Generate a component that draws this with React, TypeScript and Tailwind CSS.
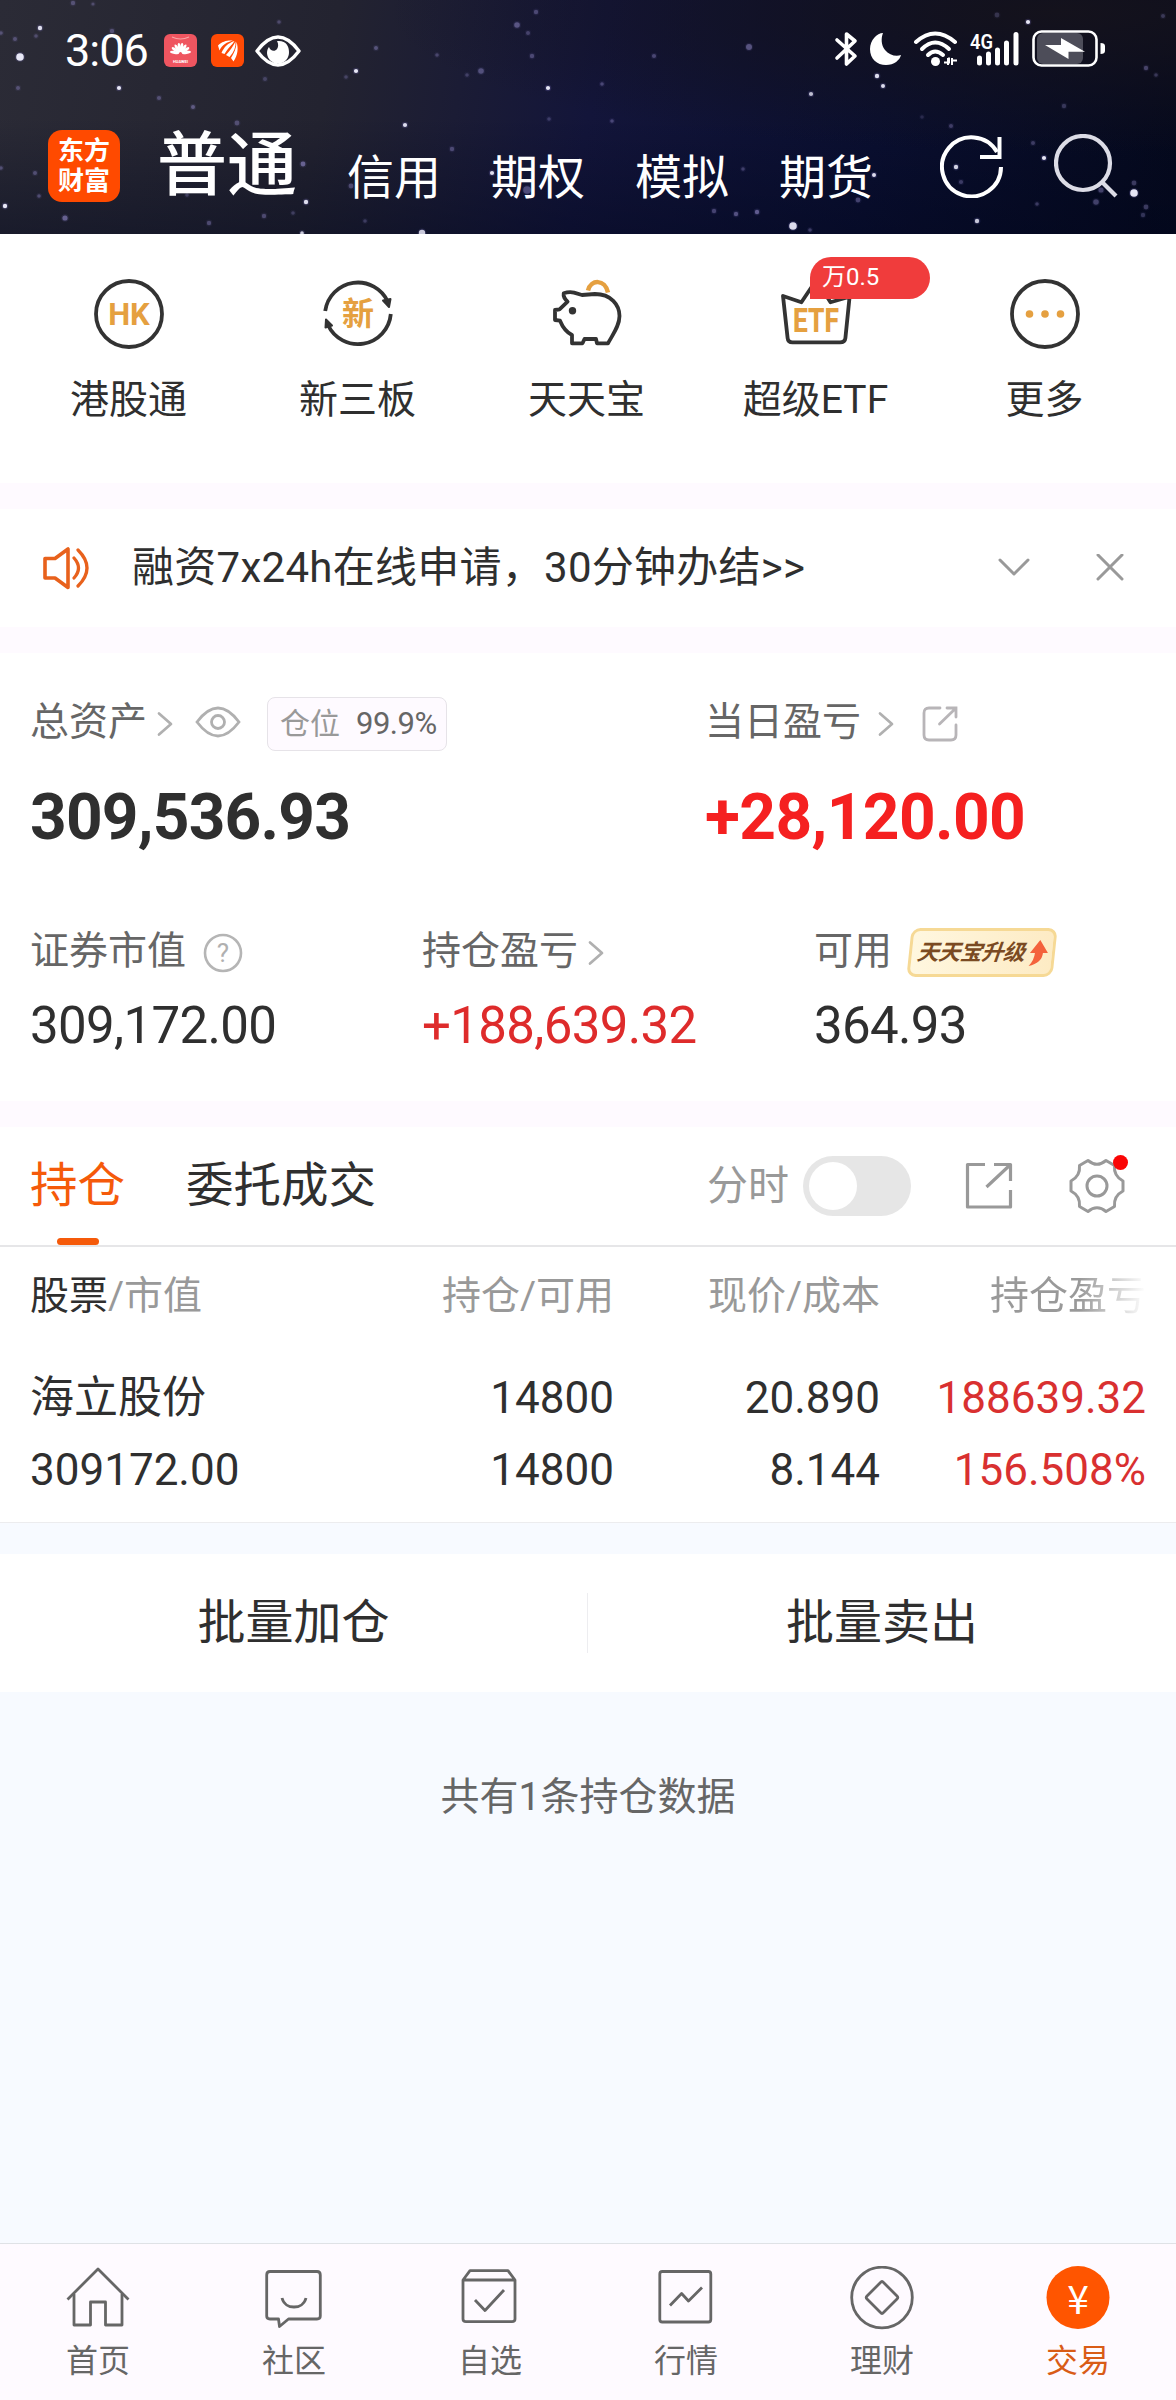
import type { ReactNode } from "react";
import clsx from "clsx";

// x, y, radius, opacity
const stars = [
  [20, 57, 4, 0.95], [40, 28, 2.4, 0.9], [15, 39, 2.2, 0.4], [36, 36, 2, 0.35], [1, 33, 2, 0.4], [73, 3, 2.4, 0.4],
  [93, 4, 1.8, 0.35], [112, 31, 2.4, 0.4], [18, 88, 2.2, 0.4], [119, 88, 2.3, 0.95], [159, 98, 2.3, 0.4],
  [193, 107, 2.2, 0.5], [237, 123, 2.6, 0.4], [265, 79, 2.2, 0.3], [279, 22, 2, 0.35], [346, 77, 2, 0.3],
  [356, 71, 2.3, 0.95], [376, 48, 2.2, 0.45], [437, 55, 2, 0.35], [481, 71, 3, 0.45], [467, 75, 2, 0.3],
  [517, 25, 3, 0.5], [536, 12, 2.4, 0.4], [528, 33, 2.2, 0.35], [532, 56, 2.4, 0.4], [548, 88, 2.3, 0.95],
  [549, 119, 2, 0.3], [405, 125, 2.3, 0.9], [303, 164, 2.6, 0.6], [306, 202, 2.4, 0.9], [452, 149, 2.4, 0.4],
  [492, 173, 2.3, 0.9], [527, 190, 4, 0.45], [351, 186, 2.6, 0.4], [65, 218, 2.8, 0.6], [5, 206, 2.4, 0.95],
  [35, 173, 2.2, 0.4], [39, 196, 2, 0.4], [1, 168, 2, 0.4], [209, 223, 2.4, 0.4], [264, 216, 2.4, 0.4],
  [302, 233, 2, 0.8], [422, 233, 3.4, 0.8], [365, 221, 2, 0.3], [293, 213, 2, 0.3], [187, 195, 2, 0.3],
  [749, 47, 3.2, 0.5], [654, 56, 2.3, 0.4], [602, 84, 2, 0.4], [612, 121, 2, 0.4], [811, 94, 2.3, 0.75],
  [877, 76, 2.4, 0.9], [883, 86, 2.2, 0.9], [1028, 22, 2.3, 0.95], [997, 15, 2.6, 0.25], [1163, 16, 2.2, 0.3],
  [1146, 68, 2.4, 0.4], [1156, 75, 2, 0.3], [1064, 106, 2.4, 0.3], [951, 126, 2.2, 0.35], [1033, 143, 2.2, 0.35],
  [1044, 158, 2.3, 0.95], [956, 167, 2.4, 0.85], [961, 182, 2.3, 0.35], [1134, 193, 4, 0.95], [1134, 183, 2.6, 0.35],
  [1096, 202, 3, 0.4], [1101, 190, 2.8, 0.4], [1146, 207, 2.6, 0.35], [1037, 204, 2, 0.35], [977, 221, 2.4, 0.8],
  [793, 226, 4, 0.9], [757, 212, 2.4, 0.6], [736, 214, 2.4, 0.5], [714, 211, 2.4, 0.4], [858, 200, 2.6, 0.4],
  [874, 175, 2.2, 0.9], [743, 169, 2, 0.35], [810, 230, 2, 0.35], [1143, 215, 2.4, 0.3], [922, 117, 2, 0.2],
];

const accounts = ["信用", "期权", "模拟", "期货"];

const positions = [
  { name: "海立股份", amount: "14800", price: "20.890", profit: "188639.32" },
  { name: "309172.00", amount: "14800", price: "8.144", profit: "156.508%" },
];

const Chevron = ({ className }: { className?: string }) => (
  <svg viewBox="0 0 16 26" className={clsx("h-[26px] w-4 shrink-0", className)} fill="none" stroke="#b0b0b0" strokeWidth="2.700" strokeLinecap="round" strokeLinejoin="round">
    <path d="M2 2.500 14 13 2 23.500" />
  </svg>
);

function StatusBar() {
  return (
    <div className="flex h-[67px] items-end pl-[65px] pr-[70px]">
      <span className="w-[99px] text-[45px] leading-[33px] tracking-[-1px] text-white">3:06</span>
      <svg viewBox="0 0 33 33" className="size-[33px]">
        <rect width="33" height="33" rx="6" fill="#ef5560" />
        <path d="M8 3q8.500 4 17 0" fill="none" stroke="#f9a6a6" strokeWidth="1.200" />
        <g fill="#fff">
          {[-80, -55, -32, -10, 10, 32, 55, 80].map((a) => (
            <ellipse key={a} cx="16.500" cy="13.500" rx="1.500" ry="4.600" transform={`rotate(${a} 16.500 19.500)`} />
          ))}
        </g>
        <text x="16.500" y="28.500" fontSize="4" fontWeight="700" fill="#fff" textAnchor="middle">HUAWEI</text>
      </svg>
      <svg viewBox="0 0 33 33" className="ml-3.5 size-[33px]">
        <rect width="33" height="33" rx="6" fill="#ff4a05" />
        <g fill="#fff">
          <path d="M7 11.500C11 7 17 6 22 6.500 16 8 11 11 8.500 16.500Z" />
          <path d="M10.500 19C13 13 17 9 23.500 7 21 11 17 14 13.500 20Z" />
          <path d="M15 21C19 17 22 12 24.500 7.500 25 13 23 18 18.500 23Z" />
          <path d="M20 24C23 19 25.500 14 25.500 8 27.500 14 27 21 22.500 27.500Z" />
        </g>
      </svg>
      <svg viewBox="0 0 46 32" className="ml-[11px] h-8 w-[46px]">
        <path d="M2 16Q23-12 44 16 23 44 2 16Z" fill="none" stroke="#fff" strokeWidth="3.400" strokeLinejoin="round" />
        <path d="M22 6C31 5 34 11 34 17A11 11 0 0 1 12 18C12 15 13 13 14 12 15 16 20 17 22 14 24 11 23 8 22 6Z" fill="#fff" />
      </svg>

      <div className="ml-auto flex h-[37px] items-center">
        <svg viewBox="0 0 24 36" className="h-9 w-6" fill="none" stroke="#fff" strokeWidth="3.600" strokeLinecap="round" strokeLinejoin="round">
          <path d="M3 9 21 25 12.500 33V3L21 10 3 27" />
        </svg>
        <svg viewBox="0 0 33 34" className="ml-[11px] h-[34px] w-[33px]">
          <path d="M14 1C8 1 1 8 1 17 1 27 8 33 17 33 25 33 31 28 32 23 27 25 20 23 16 18 12 13 12 6 14 1Z" fill="#fff" />
        </svg>
        <svg viewBox="0 0 46 36" className="ml-[11px] h-9 w-[46px]">
          <g fill="none" stroke="#fff" strokeWidth="4" strokeLinecap="round">
            <path d="M3 11Q22-6 42 11" />
            <path d="M9 18Q22 5 36 18" />
            <path d="M15 24Q22 17 30 24" />
          </g>
          <circle cx="22.500" cy="30.500" r="4.500" fill="#fff" />
          <path d="M31 31.500h5v-5M35 27v7M39 34v-7M39 29.500h5" fill="none" stroke="#fff" strokeWidth="2" />
        </svg>
        <svg viewBox="0 0 52 36" className="ml-2.5 h-9 w-[52px] overflow-visible">
          <text x="1" y="18" fontSize="21" fontWeight="600" fill="#fff" textLength="23" lengthAdjust="spacingAndGlyphs">4G</text>
          <g stroke="#fff" strokeWidth="5" strokeLinecap="round">
            <path d="M10.500 27v5M19.500 23v9M28.500 19v13M37.500 12v20M47 3.500V32" />
          </g>
        </svg>
        <svg viewBox="0 0 74 37" className="ml-[11px] h-[37px] w-[74px]">
          <rect x="5" y="3" width="46" height="31" rx="6" fill="#4d4d59" />
          <rect x="1.500" y="1.500" width="63" height="34" rx="8" fill="none" stroke="#fff" strokeWidth="2.600" />
          <path d="M68.500 13v11q4.500 0 4.500-3v-5q0-3-4.500-3Z" fill="#fff" />
          <path d="M29 8 53 21.700H36.500V29L13 15H29Z" fill="#fff" />
        </svg>
      </div>
    </div>
  );
}

function Header() {
  return (
    <header className="relative h-[234px] overflow-hidden bg-[linear-gradient(100deg,#2b2b36_0%,#232330_28%,#13153a_50%,#0a0f30_74%,#05091c_100%)]">
      <div className="absolute inset-0 bg-[radial-gradient(ellipse_at_90%_5%,#14121c_0%,#14121c00_45%),linear-gradient(to_bottom,#00051c00_50%,#00051c66_100%)]" />
      <svg viewBox="0 0 1176 234" className="absolute inset-0 h-[234px] w-full">
        {stars.map(([x, y, r, o]) => (
          <g key={`${x}-${y}`}>
            <circle cx={x} cy={y} r={r + 1} fill="#8a82d8" opacity={o * 0.2} />
            <circle cx={x} cy={y} r={r - 0.2} fill={o > 0.7 ? "#f1f1ff" : "#8f87c4"} opacity={o} />
          </g>
        ))}
      </svg>
      <div className="relative">
        <StatusBar />
        <div className="mt-[63px] flex h-[72px] items-center pl-12">
          <div className="flex size-[72px] flex-col items-center justify-center rounded-[14px] bg-[#ff4a00] text-[26px] font-bold leading-[30px] text-white">
            <span>东方</span>
            <span>财富</span>
          </div>
          <h1 className="ml-[37px] text-[70px] font-medium leading-[72px] text-white">普通</h1>
          <nav className="ml-[50px] flex gap-[50px] pt-[23px]">
            {accounts.map((a) => (
              <span key={a} className="text-[47px] leading-[48px] text-white">{a}</span>
            ))}
          </nav>
          <svg viewBox="0 0 64 64" className="ml-[67px] size-16 shrink-0" fill="none" stroke="#fff" strokeWidth="4">
            <path d="M61 33A29.500 29.500 0 1 1 57 18" />
            <path d="M59.500 3v20H40" />
          </svg>
          <svg viewBox="0 0 64 64" className="ml-[50px] size-16 shrink-0" fill="none" stroke="#dcdce6" strokeWidth="4.200">
            <circle cx="29" cy="29" r="27" />
            <path d="m48 48 14 14" />
          </svg>
        </div>
      </div>
    </header>
  );
}

function QuickLink({ label, children }: { label: string; children: ReactNode }) {
  return (
    <div className="relative flex flex-col items-center">
      <svg viewBox="0 0 72 72" className="size-[72px]" fill="none" stroke="#333" strokeWidth="3.800" strokeLinejoin="round">
        {children}
      </svg>
      <span className="mt-[30px] text-[39px] leading-10 text-[#2f2f2f]">{label}</span>
      {label === "超级ETF" && (
        <span className="absolute left-[109px] top-[-21px] h-[42px] w-[120px] rounded-[21px] rounded-bl-none bg-[#f03c3c] pl-3 text-[24px] leading-[41px] text-white">万0.5</span>
      )}
    </div>
  );
}

function QuickLinks() {
  return (
    <section className="grid h-[249px] grid-cols-5 bg-white pl-3.5 pr-[17px] pt-11">
      <QuickLink label="港股通">
        <circle cx="36" cy="36" r="33" />
        <text x="36" y="47" fontSize="31" fontWeight="700" fill="#e5a040" stroke="none" textAnchor="middle">HK</text>
      </QuickLink>
      <QuickLink label="新三板">
        <path d="M3.200 33A33 33 0 0 1 66 24" />
        <path d="M68.800 36A33 33 0 0 1 6 47" />
        <path d="m61 22.500 6 6.500 1.500-8ZM3.500 49.500l.500-8 6 6Z" fill="#333" strokeWidth="2" />
        <text x="36" y="47" fontSize="32" fontWeight="700" fill="#e5a040" stroke="none" textAnchor="middle">新</text>
      </QuickLink>
      <QuickLink label="天天宝">
        <path d="M12.700 15.300Q18 13.500 23 14.600L31 17 44 16C60 16 68.500 27 68.500 38 68.500 48 62 56 57 65.300H46L45 61H33.500L31.500 65.300H21V57C15 54 12 50 9 42.700L4 42V32L8.500 31.300 16.600 23.700C14 21 12 19 12.700 15.300Z" />
        <circle cx="21.500" cy="32.700" r="3.700" fill="#333" stroke="none" />
        <path d="M37 12.500C40 1 54 1 57 14.500" stroke="#e5a040" strokeWidth="4.500" />
      </QuickLink>
      <QuickLink label="超级ETF">
        <path d="M3 18 21.400 24.300 36.300 2 50.500 24.300 69.600 18.700 65.400 60Q65 64.300 60 64.300H12.500Q8 64.300 7.600 60Z" />
        <text x="36" y="54" fontSize="33" fontWeight="800" fill="#e5a040" stroke="none" textAnchor="middle" textLength="46" lengthAdjust="spacingAndGlyphs">ETF</text>
      </QuickLink>
      <QuickLink label="更多">
        <circle cx="36" cy="36" r="33" />
        <g fill="#e5a040" stroke="none">
          <circle cx="20.500" cy="36" r="3.800" />
          <circle cx="36" cy="36" r="3.800" />
          <circle cx="51.500" cy="36" r="3.800" />
        </g>
      </QuickLink>
    </section>
  );
}

function Notice() {
  return (
    <section className="flex h-[118px] items-center bg-white pl-[41px]">
      <svg viewBox="0 0 50 44" className="h-11 w-[50px]" fill="none" stroke="#e8611c" strokeWidth="3.600" strokeLinecap="round" strokeLinejoin="round">
        <path d="M4 12.500H14L27 3V41.500L14 32H4Z" />
        <path d="M33 12Q42 22 33 32M37 4Q55 22 37 40" strokeWidth="3.200" />
      </svg>
      <p className="ml-[41px] text-[42px] leading-[42px] tracking-[0.27px] text-[#2f2f2f]">融资7x24h在线申请，30分钟办结&gt;&gt;</p>
      <svg viewBox="0 0 32 20" className="ml-auto h-5 w-8" fill="none" stroke="#999" strokeWidth="3" strokeLinecap="round" strokeLinejoin="round">
        <path d="m2 2 14 14L30 2" />
      </svg>
      <svg viewBox="0 0 28 28" className="ml-[66px] mr-[52px] size-7" fill="none" stroke="#999" strokeWidth="3" strokeLinecap="round">
        <path d="m2 1 24 24M26 1 2 25" />
      </svg>
    </section>
  );
}

function Assets() {
  return (
    <section className="h-[448px] bg-white pt-[42px]">
      <div className="flex">
        <div className="w-[675px] pl-[30px]">
          <div className="flex h-[54px] items-center text-[39px] leading-[54px] text-[#666]">
            总资产
            <Chevron className="ml-2.5 mt-1" />
            <svg viewBox="0 0 46 32" className="ml-[22px] h-8 w-[46px]" fill="none" stroke="#b0b0b0" strokeWidth="2.800">
              <path d="M2 16Q23-12 44 16 23 44 2 16Z" />
              <circle cx="23" cy="16" r="6.500" />
            </svg>
            <span className="ml-[26px] mt-[3px] flex h-[54px] w-[180px] items-center rounded-lg border border-[#e6e3e8] bg-[#fefaff] pl-3 text-[30px] leading-[50px] text-[#999]">
              仓位
              <span className="ml-4 text-[31px] tracking-[-0.5px] text-[#666]">99.9%</span>
            </span>
          </div>
          <div className="mt-[37px] h-16 text-[64px] font-bold leading-[64px] tracking-[-0.8px] text-[#2f2f2f]">309,536.93</div>
        </div>
        <div className="pl-[30px]">
          <div className="flex h-[54px] items-center text-[39px] leading-[54px] text-[#666]">
            当日盈亏
            <Chevron className="ml-[17px] mt-1" />
            <svg viewBox="0 0 36 36" className="ml-7 mt-[3px] size-9" fill="none" stroke="#b8b5b8" strokeWidth="2.800" strokeLinecap="round">
              <path d="M18 2H7Q2 2 2 7V29Q2 34 7 34H29Q34 34 34 29V19M25 2H34V11M34 2 17.500 18" />
            </svg>
          </div>
          <div className="mt-[37px] h-16 text-[64px] font-bold leading-[64px] tracking-[-0.6px] text-[#f52020]">+28,120.00</div>
        </div>
      </div>
      <div className="mt-[75px] flex text-[51px] leading-[56px] tracking-[-0.65px] text-[#2f2f2f]">
        <div className="w-[392px] pl-[30px]">
          <div className="flex h-[52px] items-center text-[39px] leading-[52px] tracking-normal text-[#666]">
            证券市值
            <svg viewBox="0 0 40 40" className="ml-[17px] mt-1 size-10">
              <circle cx="20" cy="20" r="18" fill="none" stroke="#b5b5b5" strokeWidth="2.600" />
              <text x="20" y="29" fontSize="26" fill="#b0b0b0" textAnchor="middle">?</text>
            </svg>
          </div>
          <div className="mt-[21px]">309,172.00</div>
        </div>
        <div className="w-[392px] pl-[30px]">
          <div className="flex h-[52px] items-center text-[39px] leading-[52px] tracking-normal text-[#666]">
            持仓盈亏
            <Chevron className="ml-2.5 mt-[3px]" />
          </div>
          <div className="mt-[21px] text-[#de2b2b]">+188,639.32</div>
        </div>
        <div className="pl-[30px]">
          <div className="flex h-[52px] items-center text-[39px] leading-[52px] tracking-normal text-[#666]">
            可用
            <span className="relative ml-[17px] mt-0.5 flex h-[49px] w-[146px] -skew-x-6 items-center rounded-[9px] border-[3px] border-[#f6d995] bg-[linear-gradient(90deg,#fff7df,#fdebc4)] pl-[5px] text-[22px] font-bold italic leading-[44px] tracking-[-0.5px] text-[#7a4a22]">
              天天宝升级
              <svg viewBox="0 0 20 28" className="ml-[3px] h-7 w-5 shrink-0">
                <path d="M11 1 20 14H15Q15 24 2 27 7 21 7 14H2Z" fill="#f4623c" />
              </svg>
            </span>
          </div>
          <div className="mt-[21px]">364.93</div>
        </div>
      </div>
    </section>
  );
}

function Tabs() {
  return (
    <div className="flex h-[120px] items-center border-b-2 border-[#e6e6e8] pl-[30px] text-[47.500px] leading-[118px] text-[#2f2f2f]">
      <div className="relative text-[#f55a0a]">
        持仓
        <span className="absolute bottom-0 left-[27px] h-[7px] w-[42px] rounded-full bg-[#f55a0a]" />
      </div>
      <div className="ml-[61px]">委托成交</div>
      <span className="ml-[331px] text-[41px] text-[#999]">分时</span>
      <span className="ml-[14px] flex h-[60px] w-[108px] items-center rounded-full bg-[#e6e6e6] pl-1.5">
        <span className="size-12 rounded-full bg-white" />
      </span>
      <svg viewBox="0 0 48 48" className="ml-[54px] size-12" fill="none" stroke="#999" strokeWidth="3.200" strokeLinejoin="round">
        <path d="M20 2.500H2.500V45H45.500V28M29 2.500H45.500V19M45 3 21.500 25" />
      </svg>
      <div className="relative ml-14">
        <svg viewBox="0 0 56 56" className="size-14" fill="none" stroke="#999" strokeWidth="3" strokeLinejoin="round">
          <path d="M19 2.500Q28 10 37 2.500L45.500 7.500Q44.500 18 54 23V33Q44.500 38 45.500 48.500L37 53.500Q28 46 19 53.500L10.500 48.500Q11.500 38 2 33V23Q11.500 18 10.500 7.500Z" />
          <circle cx="28" cy="28" r="10" />
        </svg>
        <span className="absolute right-[-3px] top-[-3px] size-[15px] rounded-full bg-[#fa0505]" />
      </div>
    </div>
  );
}

function Positions() {
  return (
    <section className="bg-white">
      <Tabs />
      <div className="grid h-[276px] grid-cols-[300px_284px_266px_266px] content-start border-b border-[#ececee] pl-[30px] text-right text-[44px] leading-[72px] text-[#2f2f2f]">
        <div className="h-[115px] text-left text-[39px] leading-[98px] text-[#999]">
          <span className="text-[#2f2f2f]">股票</span>/市值
        </div>
        <div className="text-[39px] leading-[98px] text-[#999]">持仓/可用</div>
        <div className="text-[39px] leading-[98px] text-[#999]">现价/成本</div>
        <div className="bg-[linear-gradient(90deg,#999_75%,#fff_100%)] bg-clip-text text-[39px] leading-[98px] text-transparent">持仓盈亏</div>
        {positions.map((p) => (
          <div key={p.name} className="contents">
            <div className="text-left">{p.name}</div>
            <div>{p.amount}</div>
            <div>{p.price}</div>
            <div className="text-[#d93030]">{p.profit}</div>
          </div>
        ))}
      </div>
    </section>
  );
}

function BatchActions() {
  return (
    <section className="mt-[31px] flex h-[138px] items-center bg-white text-center text-[48px] leading-[60px] text-[#2f2f2f]">
      <div className="w-[587px]">批量加仓</div>
      <div className="h-[60px] w-px bg-[#ededf0]" />
      <div className="flex-1">批量卖出</div>
    </section>
  );
}

function NavItem({ label, active, children }: { label: string; active?: boolean; children: ReactNode }) {
  return (
    <div className={clsx("flex flex-1 flex-col items-center text-[32px] leading-10", active ? "text-[#d95c17]" : "text-[#666]")}>
      <svg viewBox="0 0 64 64" className="mb-[11px] size-16" fill="none" stroke="#666" strokeWidth="2.800" strokeLinejoin="round">
        {children}
      </svg>
      {label}
    </div>
  );
}

function BottomNav() {
  return (
    <nav className="flex h-[157px] border-t border-[#dfe2e6] bg-[#fefaff] pt-[22px]">
      <NavItem label="首页">
        <path d="M1.500 33.500 32 3 62.500 33.500" />
        <path d="M8 28V59H24.500V36H39.500V59H56V28" />
      </NavItem>
      <NavItem label="社区">
        <path d="M8 5.500H55Q58.300 5.500 58.300 9V50Q58.300 53 55 53H26.500L17.500 60.500 16.500 53H8Q4.700 53 4.700 50V9Q4.700 5.500 8 5.500Z" />
        <path d="M20 32C23 44 41 44 44 32" />
      </NavItem>
      <NavItem label="自选">
        <path d="M5 14 12 4.700H50L57 14V53Q57 55.700 54 55.700H8Q5 55.700 5 53ZM5 14H57" />
        <path d="m17 34 10 10.500L46 24" />
      </NavItem>
      <NavItem label="行情">
        <rect x="5.800" y="5.500" width="51" height="50.500" rx="2.500" />
        <path d="M16 39.500 27.600 27.500 34.500 35 48 21.500" />
      </NavItem>
      <NavItem label="理财">
        <circle cx="32" cy="31.500" r="30.300" />
        <path d="M30.500 16.500Q32 14.500 33.500 16.500L47 30Q48.500 31.500 47 33L33.500 46.500Q32 48.500 30.500 46.500L17 33Q15.500 31.500 17 30Z" />
      </NavItem>
      <NavItem label="交易" active>
        <circle cx="32" cy="31.500" r="31.500" fill="#ff5500" stroke="none" />
        <text x="32" y="47.500" fontSize="39" fill="#fff" stroke="none" textAnchor="middle" className="font-['Noto_Sans_CJK_SC',sans-serif]">¥</text>
      </NavItem>
    </nav>
  );
}

export default function App() {
  return (
    <div className="flex h-[2400px] w-[1176px] flex-col overflow-hidden whitespace-nowrap bg-[#f7faff] font-[Roboto,'Noto_Sans_CJK_SC',sans-serif]">
      <Header />
      <div className="flex flex-col gap-[26px] bg-[#fefaff]">
        <QuickLinks />
        <Notice />
        <Assets />
        <Positions />
      </div>
      <BatchActions />
      <p className="mt-[75px] text-center text-[39px] leading-[60px] text-[#666]">共有1条持仓数据</p>
      <div className="mt-auto">
        <BottomNav />
      </div>
    </div>
  );
}
